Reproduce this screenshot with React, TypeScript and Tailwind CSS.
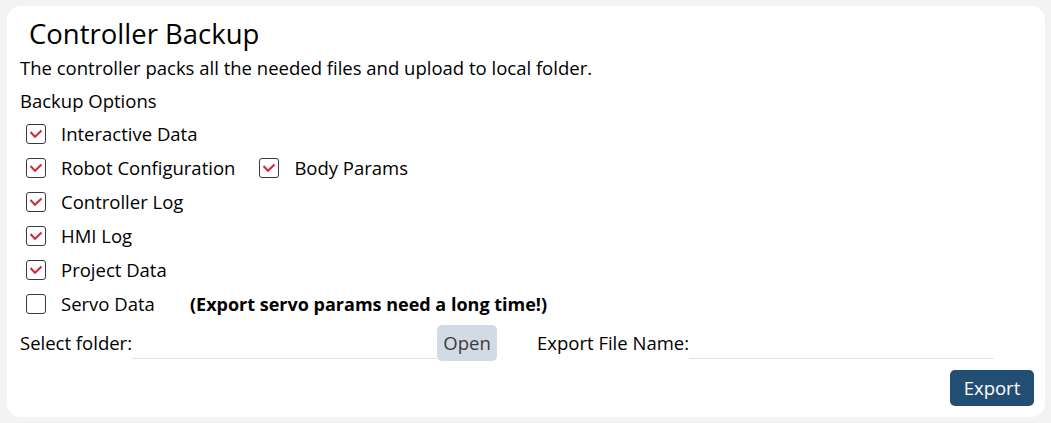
import React from "react";

type Opt = { label: string; checked: boolean };

function Box({ checked }: { checked: boolean }) {
  return (
    <span className="flex h-[20px] w-[20px] shrink-0 items-center justify-center rounded-[3px] border-[1.5px] border-[#3a3a3a] bg-white">
      {checked && (
        <svg width="14" height="10" viewBox="0 0 14 10" fill="none">
          <polyline points="1.5,3 6,7.8 12.5,1.5" stroke="#d0293a" strokeWidth="2" strokeLinejoin="miter" />
        </svg>
      )}
    </span>
  );
}

function Check({ label, checked }: Opt) {
  return (
    <label className="flex items-center gap-[15px]">
      <Box checked={checked} />
      <span>{label}</span>
    </label>
  );
}

export default function App() {
  const font = { fontFamily: "'Open Sans', 'Noto Sans', sans-serif" };
  return (
    <div className="min-h-[423px] bg-[#f3f3f3] pt-[6px] pb-[6px] pl-[7px] pr-[6px]" style={font}>
      <div className="flex h-[411px] flex-col rounded-[14px] bg-white pl-[13px] pr-[11px] pt-[10px] text-[18.5px] text-black">
        <h1 className="flex h-[35px] items-center pl-[9px] text-[27.5px] leading-none">Controller Backup</h1>
        <p className="flex h-[34px] items-center">The controller packs all the needed files and upload to local folder.</p>
        <div className="flex h-[32px] items-center">Backup Options</div>
        <div className="flex flex-col pl-[6px]">
          <div className="flex h-[34px] items-center">
            <Check label="Interactive Data" checked />
          </div>
          <div className="flex h-[34px] items-center gap-[24px]">
            <Check label="Robot Configuration" checked />
            <Check label="Body Params" checked />
          </div>
          <div className="flex h-[34px] items-center">
            <Check label="Controller Log" checked />
          </div>
          <div className="flex h-[34px] items-center">
            <Check label="HMI Log" checked />
          </div>
          <div className="flex h-[34px] items-center">
            <Check label="Project Data" checked />
          </div>
          <div className="flex h-[34px] items-center">
            <div className="w-[164px]">
              <Check label="Servo Data" checked={false} />
            </div>
            <span className="text-[18px] font-bold">(Export servo params need a long time!)</span>
          </div>
        </div>
        <div className="flex h-[44px] items-center">
          <span>Select folder:</span>
          <div className="flex items-end self-stretch">
            <div className="mb-[6px] h-[1px] w-[305px] bg-[#e2e2e2]" />
          </div>
          <button className="h-[36px] w-[60px] rounded-[5px] bg-[#d2dae5] text-[#3a3a3a]">Open</button>
          <span className="ml-[40px]">Export File Name:</span>
          <div className="flex items-end self-stretch">
            <div className="mb-[6px] h-[1px] w-[305px] bg-[#e2e2e2]" />
          </div>
        </div>
        <div className="mt-[5px] flex justify-end">
          <button className="h-[36px] w-[84px] rounded-[5px] bg-[#234e74] text-white">Export</button>
        </div>
      </div>
    </div>
  );
}
